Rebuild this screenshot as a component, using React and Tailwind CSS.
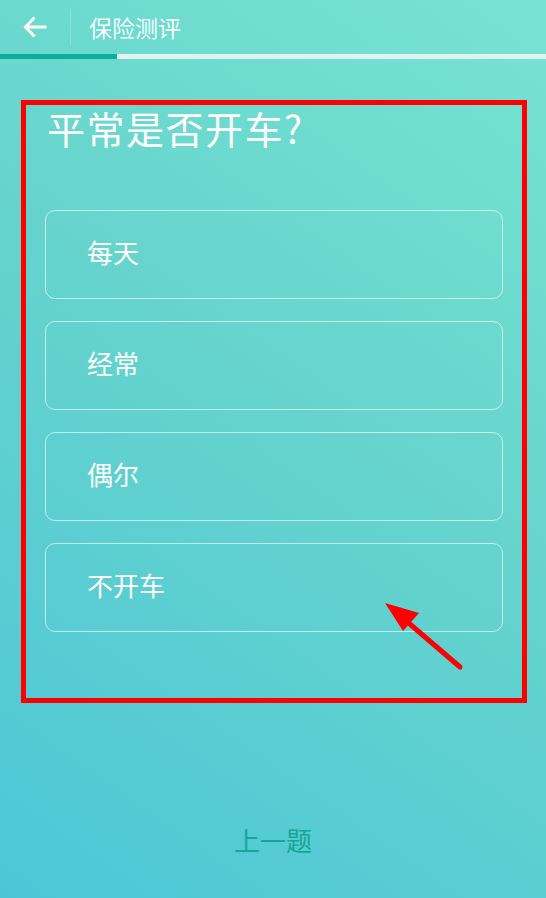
const OPTIONS = ['每天', '经常', '偶尔', '不开车']

const FONT = { fontFamily: '"Noto Sans CJK SC", "Noto Sans", sans-serif' }

export default function App() {
  return (
    <div
      className="relative w-[546px] h-[898px] overflow-hidden bg-[linear-gradient(215deg,#78e3d3_0%,#66d4cd_45%,#4cc6d7_100%)] text-white"
      style={FONT}
    >
      {/* Header */}
      <header className="flex items-center h-[54px]">
        <button className="w-[70px] h-full flex items-center justify-center">
          <svg width="26" height="22" viewBox="0 0 26 22" fill="none" stroke="white" strokeWidth="3" strokeLinecap="square">
            <path d="M23 11H4" />
            <path d="M11.5 2.5L3.5 11L11.5 19.5" />
          </svg>
        </button>
        <div className="w-px h-[36px] bg-white/20" />
        <h1 className="ml-[18px] text-[23px] font-normal text-white/95 leading-none">保险测评</h1>
      </header>

      {/* Progress */}
      <div className="flex h-[5px]">
        <div className="w-[117px] bg-[#10ad9c]" />
        <div className="flex-1 bg-[#dff4f1]" />
      </div>

      {/* Question */}
      <section className="mt-[41px] ml-[21px] w-[506px] h-[603px] border-[5px] border-[#ff0000] px-[19px]">
        <h2 className="text-[38px] font-normal leading-[46px] tracking-[1.5px] pl-[2px]">平常是否开车?</h2>
        <div className="mt-[59px] flex flex-col gap-[22px]">
          {OPTIONS.map((o) => (
            <button
              key={o}
              className="h-[89px] rounded-[10px] border border-white/60 flex items-center pl-[41px] pb-[6px] text-[26px] text-left"
            >
              {o}
            </button>
          ))}
        </div>
      </section>

      {/* annotation arrow */}
      <svg className="absolute left-[380px] top-[595px]" width="90" height="80" viewBox="0 0 90 80">
        <path d="M80 72L24 24" stroke="#ff0000" strokeWidth="5" strokeLinecap="round" />
        <path d="M5 8L39 18L23 36Z" fill="#ff0000" />
      </svg>

      {/* Prev */}
      <div className="absolute left-0 right-0 top-[820px] text-center">
        <button className="text-[26px] text-[#17a595]">上一题</button>
      </div>
    </div>
  )
}
